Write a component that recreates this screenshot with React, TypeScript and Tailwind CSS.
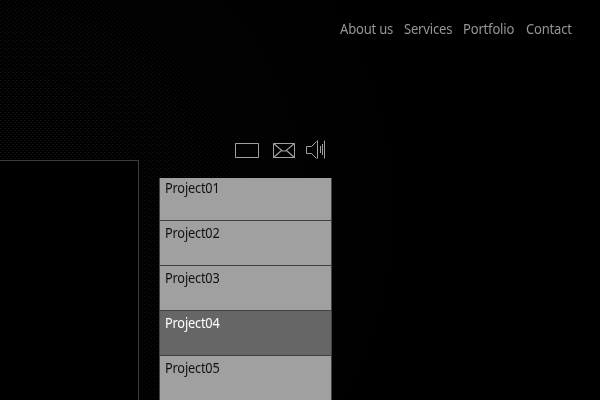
const links = [
  { label: 'About us', width: 'w-[53px]' },
  { label: 'Services', width: 'w-[48px]' },
  { label: 'Portfolio', width: 'w-[52px]' },
  { label: 'Contact', width: 'w-[46px]' },
];
const projects = ['Project01', 'Project02', 'Project03', 'Project04', 'Project05'];

function Texture() {
  return (
    <svg className="absolute inset-0 h-full w-full" aria-hidden="true" shapeRendering="crispEdges">
      <defs>
        <pattern id="mesh" width="4" height="4" patternUnits="userSpaceOnUse">
          <path d="M0 0h2v1H0zM2 2h2v1H2z" fill="#0f0f0f" />
        </pattern>
        <radialGradient id="glow" gradientUnits="userSpaceOnUse" cx="0" cy="210" r="400">
          <stop offset="0" stopColor="#fff" />
          <stop offset="0.5" stopColor="#aaa" />
          <stop offset="1" stopColor="#000" />
        </radialGradient>
        <mask id="fade">
          <rect width="600" height="400" fill="url(#glow)" />
        </mask>
      </defs>
      <rect width="600" height="400" fill="url(#mesh)" mask="url(#fade)" />
    </svg>
  );
}

function Icons() {
  return (
    <div className="flex h-[20px] pl-[76px]">
      <svg className="h-[20px] w-[38px] shrink-0" viewBox="0 0 38 20" fill="none" stroke="#a0a0a0">
        <path d="M.5 3.5h23v14H.5z" />
      </svg>
      <svg className="h-[20px] w-[32px] shrink-0" viewBox="0 0 32 20" fill="none" stroke="#a0a0a0">
        <path d="M.5 3.5h21v14H.5z" />
        <path d="M.5 3.5l9 7.5h3l9-7.5M.5 17.5l8-7M21.5 17.5l-8-7" strokeWidth="1.2" />
      </svg>
      <svg className="h-[20px] w-[22px] shrink-0" viewBox="0 0 22 20" fill="none" stroke="#a0a0a0">
        <path d="M6.5 6.5h-5v7h5" />
        <path d="M6.5 6.5l5-5M6.5 13.5l5 5M12.5 .5v18M15.5 6v7M17.5 4v11M19.5 .5v18" />
      </svg>
    </div>
  );
}

export default function App() {
  return (
    <div className="relative isolate h-[400px] w-[600px] overflow-hidden bg-black font-['Noto_Sans',sans-serif] text-[14px]">
      <div className="absolute inset-0 -z-10">
        <Texture />
      </div>
      <div className="flex h-full flex-col">
        <nav className="flex h-[140px] shrink-0 justify-end gap-[11px] pr-[28px] pt-[19px] leading-[20px] text-[#969696]">
          {links.map((l) => (
            <a key={l.label} className={`${l.width} origin-left scale-x-[0.93] whitespace-nowrap text-[14px] tracking-[-0.2px]`}>
              {l.label}
            </a>
          ))}
        </nav>
        <main className="flex flex-1">
          <section className="mt-[20px] w-[139px] border-r border-t border-[#3c3c3c] bg-black" />
          <aside className="ml-[20px] w-[173px]">
            <Icons />
            <ul className="mt-[18px] border-x border-[#444]">
              {projects.map((p, i) => (
                <li
                  key={p}
                  className={`box-border border-b border-[#404040] pl-[5px] text-[14px] leading-[20px] tracking-[-0.2px] ${
                    i === 0 ? 'h-[43px]' : 'h-[45px] pt-[2px]'
                  } ${i === 3 ? 'bg-[#666] text-white' : 'bg-[#a0a0a0] text-[#111]'}`}
                >
                  <span className="inline-block origin-left scale-x-[0.91]">{p}</span>
                </li>
              ))}
            </ul>
          </aside>
        </main>
      </div>
    </div>
  );
}
